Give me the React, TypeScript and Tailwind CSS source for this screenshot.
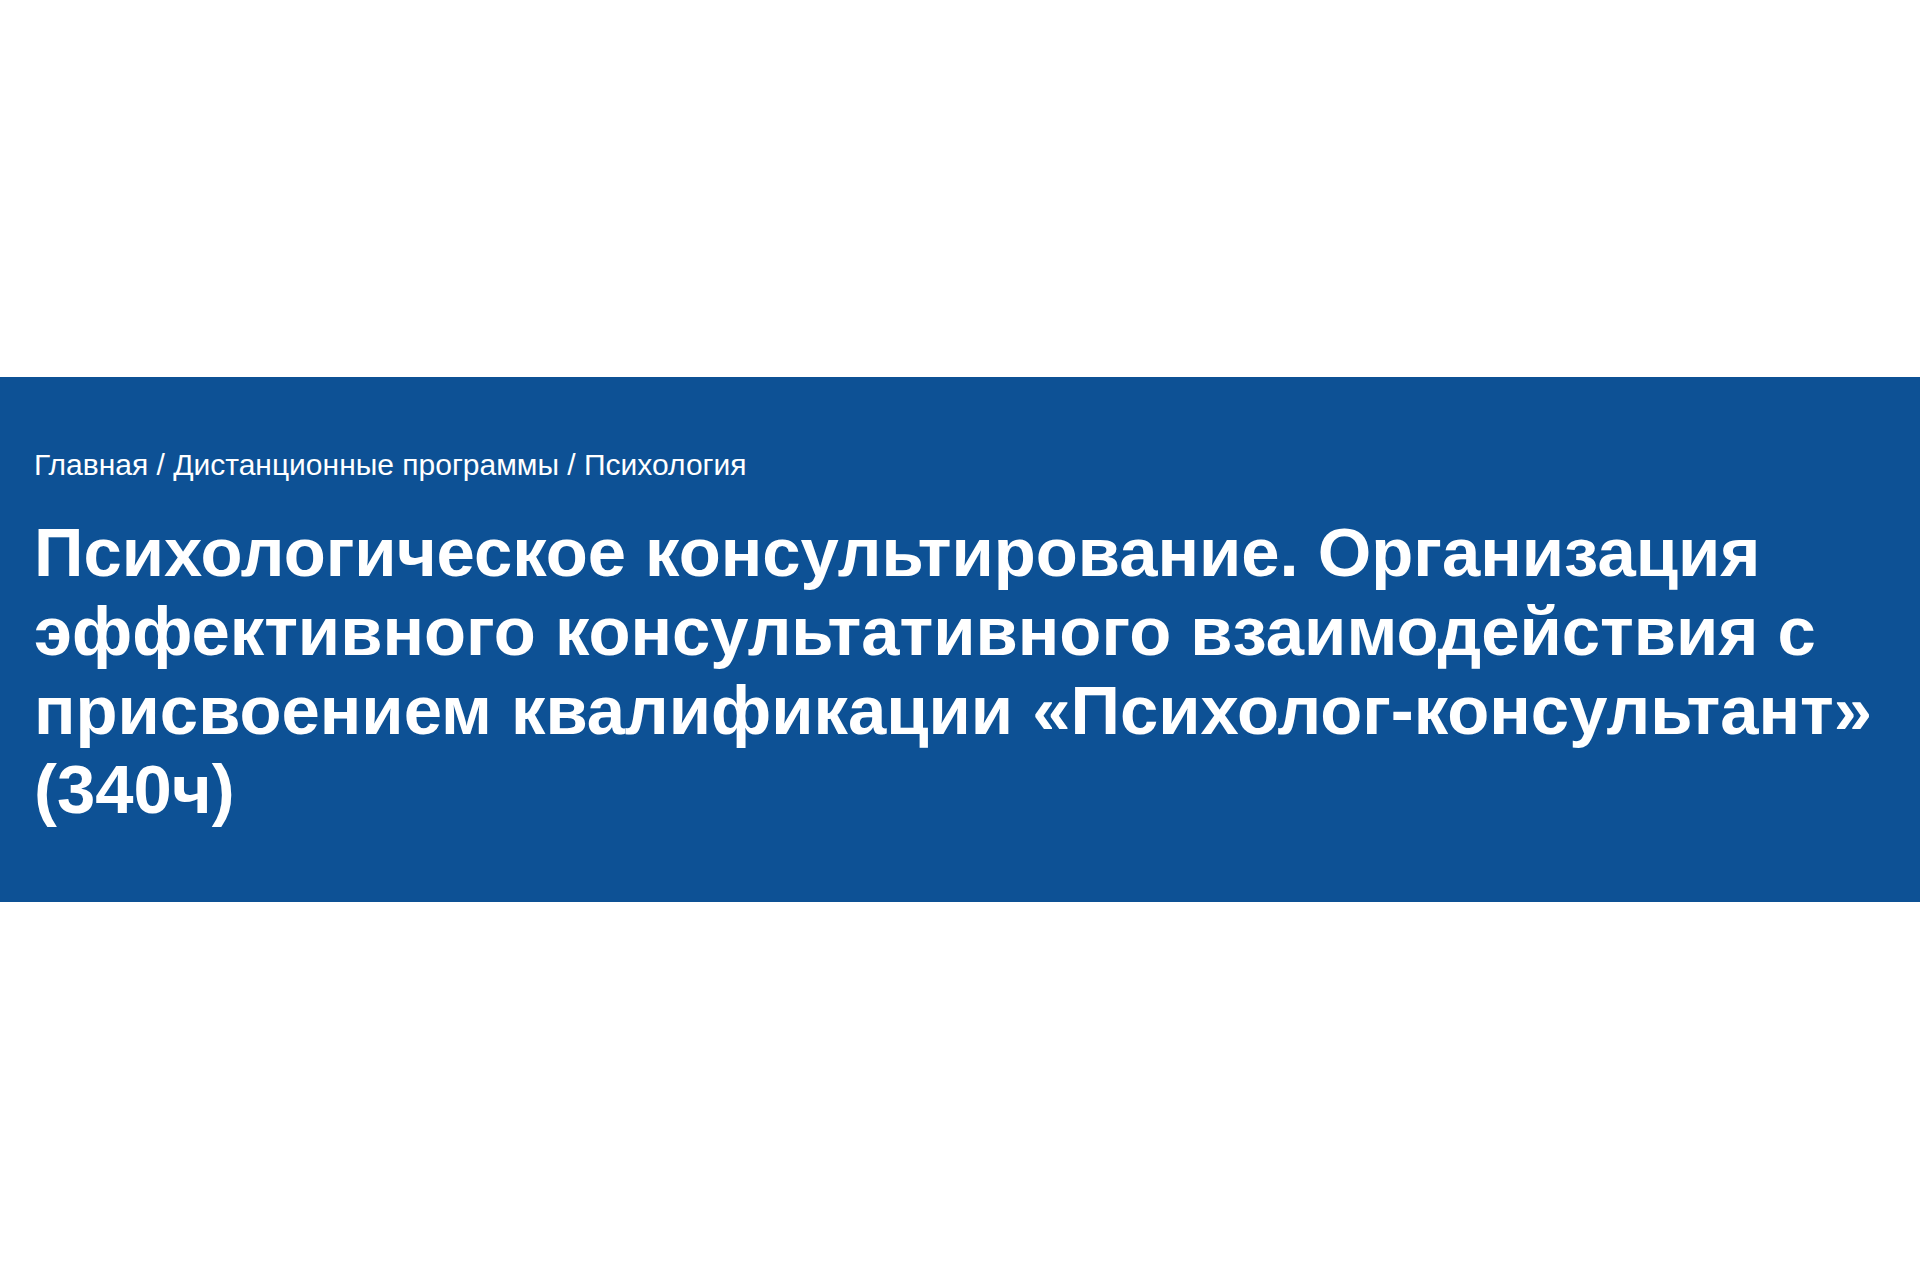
const crumbs = ['Главная', 'Дистанционные программы', 'Психология'];

const App = () => {
    return (
        <div className="min-h-screen bg-white pt-[377px]" style={{ fontFamily: '"Liberation Sans", Arial, sans-serif' }}>
            {/* Course heading band */}
            <section className="bg-[#0d5195] px-[34px] pt-[70px] pb-[73px] text-white">
                <nav className="text-[30px] leading-[36px]">
                    {crumbs.map((item, i) => (
                        <span key={item}>
                            {i > 0 && <span> / </span>}
                            <a href="#">{item}</a>
                        </span>
                    ))}
                </nav>
                <h1 className="mt-[30px] text-[68.8px] font-bold leading-[79px]">
                    Психологическое консультирование. Организация эффективного консультативного взаимодействия с
                    присвоением квалификации «Психолог-консультант» (340ч)
                </h1>
            </section>
        </div>
    );
};

export default App;
